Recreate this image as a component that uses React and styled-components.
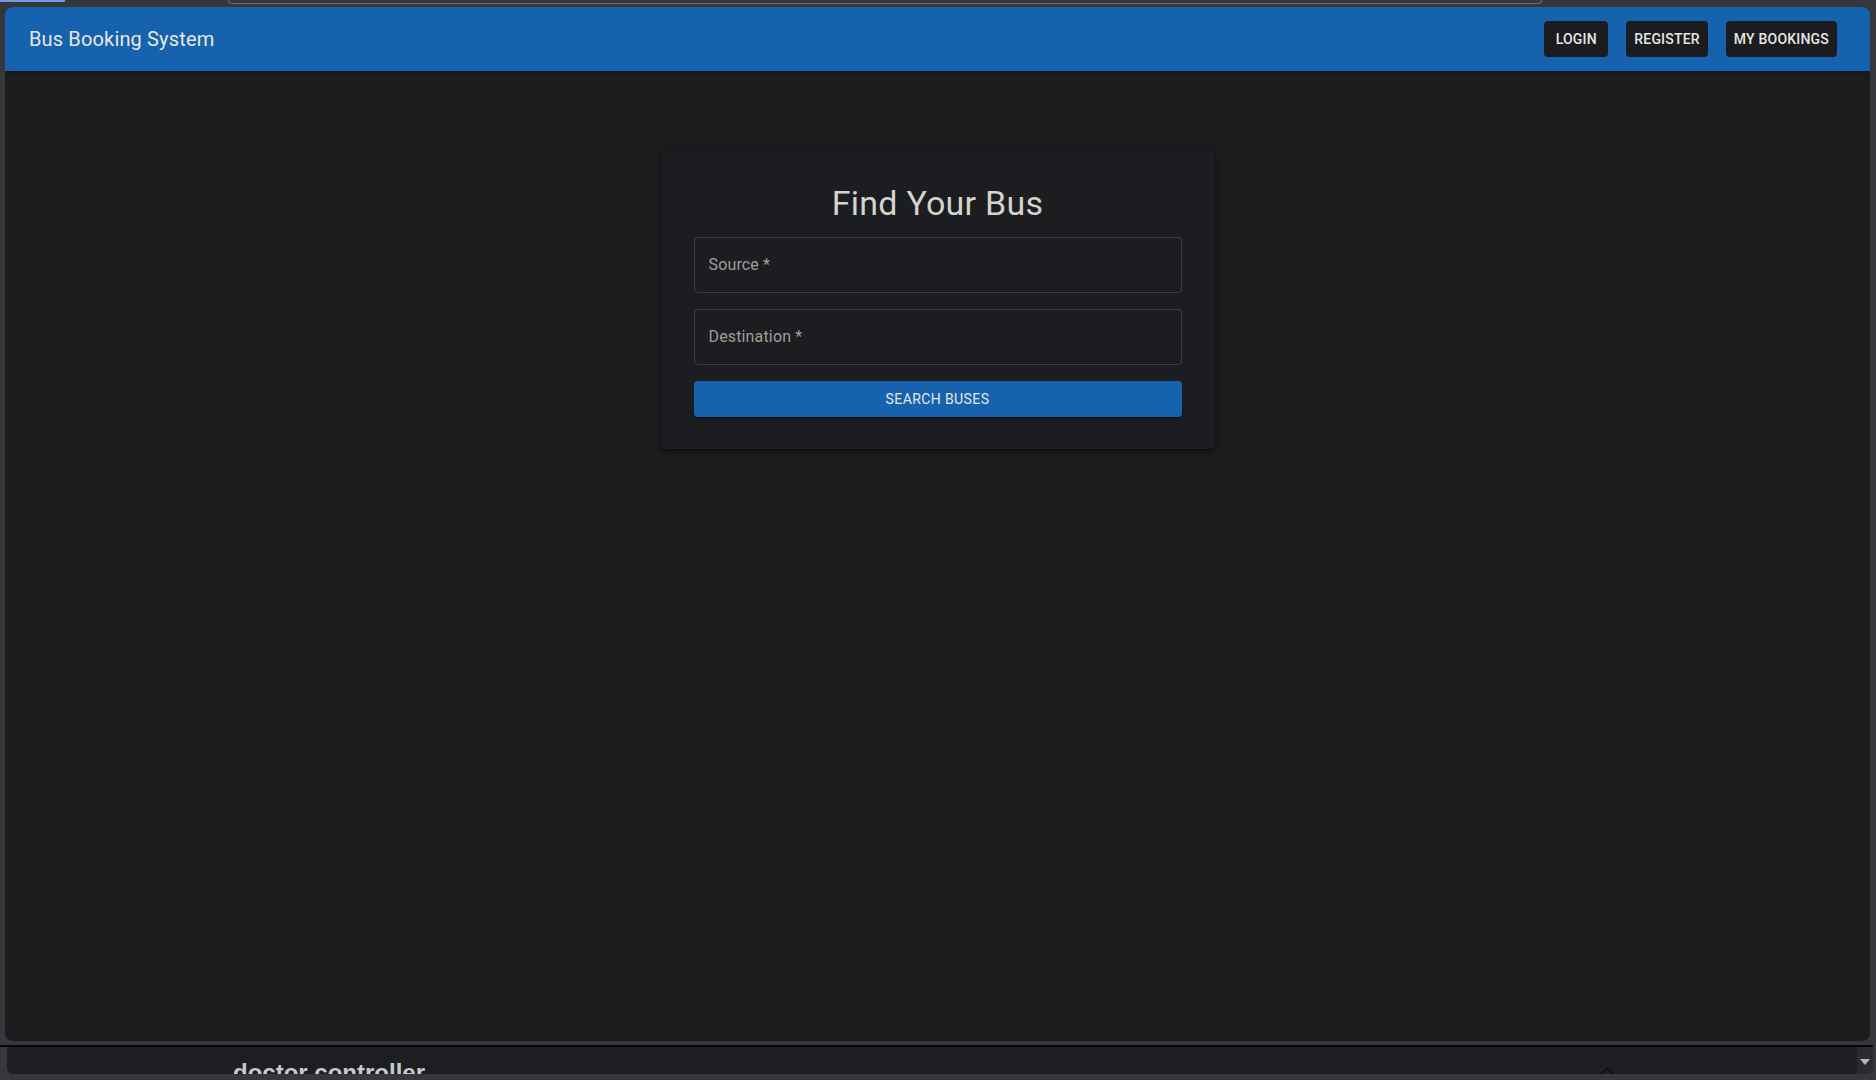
import styled, { createGlobalStyle } from "styled-components";

const GlobalStyle = createGlobalStyle`
  html, body {
    margin: 0;
    padding: 0;
    background: #36373b;
    font-family: Roboto, "Liberation Sans", sans-serif;
  }
  * { box-sizing: border-box; }
`;

export default function App() {
  return (
    <>
      <GlobalStyle />
      <Screen>
        <ChromeTop>
          <ActiveTab />
          <AddressBar />
        </ChromeTop>

        <AppWindow>
          <AppBar>
            <Brand>Bus Booking System</Brand>
            <NavButtons>
              <NavButton>Login</NavButton>
              <NavButton>Register</NavButton>
              <NavButton>My Bookings</NavButton>
            </NavButtons>
          </AppBar>

          <Main>
            <Card>
              <Heading>Find Your Bus</Heading>
              <Field>
                <FieldLabel>Source *</FieldLabel>
              </Field>
              <Field>
                <FieldLabel>Destination *</FieldLabel>
              </Field>
              <SearchButton>Search Buses</SearchButton>
            </Card>
          </Main>
        </AppWindow>

        <Divider />

        <DevRow>
          <DevPanel>
            <DevTitle>doctor controller</DevTitle>
            <Caret viewBox="0 0 14 8">
              <path d="M1 7 L7 1.5 L13 7" fill="none" stroke="#0c0c0d" strokeWidth="1.6" />
            </Caret>
          </DevPanel>
          <ScrollTrack>
            <ScrollArrow />
          </ScrollTrack>
        </DevRow>
      </Screen>
    </>
  );
}

const Screen = styled.div`
  display: flex;
  flex-direction: column;
  width: 1876px;
  height: 1080px;
  overflow: hidden;
  background: #36373b;
`;

const ChromeTop = styled.div`
  display: flex;
  height: 7px;
  flex-shrink: 0;
`;

const ActiveTab = styled.div`
  width: 65px;
  height: 2px;
  background: #6f9be0;
`;

const AddressBar = styled.div`
  margin-left: 163px;
  width: 1314px;
  height: 4px;
  border: 1px solid #6c6d72;
  border-top: none;
  border-radius: 0 0 8px 8px;
`;

const AppWindow = styled.div`
  display: flex;
  flex-direction: column;
  margin-left: 5px;
  width: 1865px;
  height: 1034px;
  flex-shrink: 0;
  border-radius: 8px;
  overflow: hidden;
  background: #1b1c1e;
`;

const AppBar = styled.header`
  display: flex;
  align-items: center;
  justify-content: space-between;
  height: 64px;
  flex-shrink: 0;
  padding: 0 33px 0 24px;
  background: #1662ae;
  box-shadow: 0 2px 4px -1px rgba(0, 0, 0, 0.3);
`;

const Brand = styled.h6`
  margin: 0;
  font-size: 20px;
  font-weight: 400;
  letter-spacing: 0.15px;
  color: #e8e6e3;
`;

const NavButtons = styled.nav`
  display: flex;
  gap: 18px;
`;

const NavButton = styled.button`
  min-width: 64px;
  height: 36px;
  padding: 6px 8px;
  border: none;
  border-radius: 4px;
  background: #1b1c1f;
  color: #e8e6e3;
  font-family: Roboto, "Liberation Sans", sans-serif;
  font-size: 14px;
  font-weight: 500;
  letter-spacing: 0.2px;
  text-transform: uppercase;
`;

const Main = styled.main`
  flex: 1;
  display: flex;
  justify-content: center;
  align-items: flex-start;
  padding-top: 81px;
`;

const Card = styled.section`
  display: flex;
  flex-direction: column;
  width: 552px;
  padding: 31px 32px 32px;
  border-radius: 4px;
  background: #1c1d20;
  box-shadow: 0 3px 3px -2px rgba(0, 0, 0, 0.35), 0 3px 4px 0 rgba(0, 0, 0, 0.25),
    0 1px 8px 0 rgba(0, 0, 0, 0.22);
`;

const Heading = styled.h4`
  margin: 0 0 12px;
  text-align: center;
  font-size: 34px;
  font-weight: 400;
  line-height: 1.235;
  letter-spacing: 0.25px;
  color: #d6d2cc;
`;

const Field = styled.div`
  display: flex;
  align-items: center;
  height: 56px;
  margin-bottom: 16px;
  padding: 0 14px;
  border: 1px solid #3b3d41;
  border-radius: 4px;
`;

const FieldLabel = styled.span`
  font-size: 16px;
  letter-spacing: 0.15px;
  color: #a19d97;
`;

const SearchButton = styled.button`
  height: 36px;
  border: none;
  border-radius: 4px;
  background: #1662ae;
  color: #e8e6e3;
  font-family: Roboto, "Liberation Sans", sans-serif;
  font-size: 14px;
  font-weight: 400;
  letter-spacing: 0.4px;
  text-transform: uppercase;
  box-shadow: 0 3px 1px -2px rgba(0, 0, 0, 0.2), 0 2px 2px 0 rgba(0, 0, 0, 0.14);
`;

const Divider = styled.div`
  height: 2px;
  margin-top: 4px;
  width: 1873px;
  flex-shrink: 0;
  background: #060607;
`;

const DevRow = styled.div`
  display: flex;
  height: 27px;
  flex-shrink: 0;
  padding-left: 7px;
`;

const DevPanel = styled.div`
  flex: 0 0 1850px;
  display: flex;
  align-items: flex-start;
  padding-left: 226px;
  overflow: hidden;
  background: #1d1e21;
  border-radius: 0 0 0 6px;
`;

const DevTitle = styled.span`
  margin-top: 14px;
  font-family: "Liberation Sans", Arial, sans-serif;
  font-size: 24px;
  font-weight: 700;
  line-height: 1;
  color: #c9c9cb;
  white-space: nowrap;
`;

const Caret = styled.svg`
  width: 14px;
  height: 8px;
  margin: 20px 0 0 1175px;
`;

const ScrollTrack = styled.div`
  display: flex;
  justify-content: center;
  width: 16px;
  padding-top: 12px;
  background: #2a2b2f;
  border-radius: 0 0 6px 0;
`;

const ScrollArrow = styled.div`
  width: 0;
  height: 0;
  border-left: 5px solid transparent;
  border-right: 5px solid transparent;
  border-top: 6px solid #b5b5b8;
`;
